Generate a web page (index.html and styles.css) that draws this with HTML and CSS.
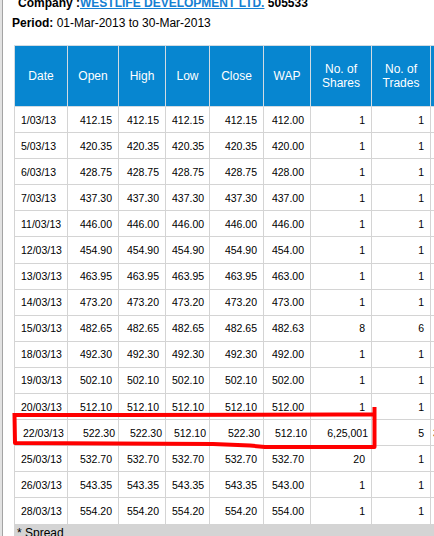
FILE: index.html
```html
<!DOCTYPE html>
<html>
<head>
<meta charset="utf-8">
<link rel="stylesheet" href="styles.css">
</head>
<body>
<div class="frame">
<div class="page">
  <div class="info">
    <p class="company"><b>Company :</b><a href="#">WESTLIFE DEVELOPMENT LTD.</a> <b>505533</b></p>
    <p class="period"><b>Period:</b> 01-Mar-2013 to 30-Mar-2013</p>
  </div>
  <table class="prices">
    <colgroup>
      <col class="c-date"><col class="c-open"><col class="c-high"><col class="c-low"><col class="c-close"><col class="c-wap"><col class="c-shares"><col class="c-trades"><col class="c-turn">
    </colgroup>
    <thead>
      <tr><th>Date</th><th>Open</th><th>High</th><th>Low</th><th>Close</th><th>WAP</th><th>No. of<br>Shares</th><th>No. of<br>Trades</th><th>Total<br>Turnover</th></tr>
    </thead>
    <tbody>
      <tr><td>1/03/13</td><td>412.15</td><td>412.15</td><td>412.15</td><td>412.15</td><td>412.00</td><td>1</td><td>1</td><td></td></tr>
      <tr><td>5/03/13</td><td>420.35</td><td>420.35</td><td>420.35</td><td>420.35</td><td>420.00</td><td>1</td><td>1</td><td></td></tr>
      <tr><td>6/03/13</td><td>428.75</td><td>428.75</td><td>428.75</td><td>428.75</td><td>428.00</td><td>1</td><td>1</td><td></td></tr>
      <tr><td>7/03/13</td><td>437.30</td><td>437.30</td><td>437.30</td><td>437.30</td><td>437.00</td><td>1</td><td>1</td><td></td></tr>
      <tr><td>11/03/13</td><td>446.00</td><td>446.00</td><td>446.00</td><td>446.00</td><td>446.00</td><td>1</td><td>1</td><td></td></tr>
      <tr><td>12/03/13</td><td>454.90</td><td>454.90</td><td>454.90</td><td>454.90</td><td>454.00</td><td>1</td><td>1</td><td></td></tr>
      <tr><td>13/03/13</td><td>463.95</td><td>463.95</td><td>463.95</td><td>463.95</td><td>463.00</td><td>1</td><td>1</td><td></td></tr>
      <tr><td>14/03/13</td><td>473.20</td><td>473.20</td><td>473.20</td><td>473.20</td><td>473.00</td><td>1</td><td>1</td><td></td></tr>
      <tr><td>15/03/13</td><td>482.65</td><td>482.65</td><td>482.65</td><td>482.65</td><td>482.63</td><td>8</td><td>6</td><td></td></tr>
      <tr><td>18/03/13</td><td>492.30</td><td>492.30</td><td>492.30</td><td>492.30</td><td>492.00</td><td>1</td><td>1</td><td></td></tr>
      <tr><td>19/03/13</td><td>502.10</td><td>502.10</td><td>502.10</td><td>502.10</td><td>502.00</td><td>1</td><td>1</td><td></td></tr>
      <tr><td>20/03/13</td><td>512.10</td><td>512.10</td><td>512.10</td><td>512.10</td><td>512.00</td><td>1</td><td>1</td><td></td></tr>
      <tr class="pasted"><td>22/03/13</td><td>522.30</td><td>522.30</td><td>512.10</td><td>522.30</td><td>512.10</td><td>6,25,001</td><td>5</td><td class="turn">3,26,51,522</td></tr>
      <tr><td>25/03/13</td><td>532.70</td><td>532.70</td><td>532.70</td><td>532.70</td><td>532.70</td><td>20</td><td>1</td><td></td></tr>
      <tr><td>26/03/13</td><td>543.35</td><td>543.35</td><td>543.35</td><td>543.35</td><td>543.00</td><td>1</td><td>1</td><td></td></tr>
      <tr><td>28/03/13</td><td>554.20</td><td>554.20</td><td>554.20</td><td>554.20</td><td>554.00</td><td>1</td><td>1</td><td></td></tr>
    </tbody>
  </table>
  <div class="spread">* Spread</div>
  <svg class="annot" width="434" height="536" viewBox="0 0 434 536">
    <path d="M15 415 L126 415 L337 414.5 L374.5 414.5 M374.5 409 L374.5 447 L265 447 L250 445.5 L213 444 L15 443 L14.5 415" fill="none" stroke="#ff0000" stroke-width="4" stroke-linejoin="round" stroke-linecap="square"/>
  </svg>
</div>
</div>
</body>
</html>
```
FILE: styles.css
```css
html, body {
  margin: 0;
  padding: 0;
  background: #ffffff;
  overflow: hidden;
}
body {
  width: 434px;
  height: 536px;
  font-family: "Liberation Sans", Arial, sans-serif;
  color: #000;
}
.frame {
  display: flow-root;
  border-left: 2px solid #e2e2e2;
  height: 536px;
  overflow: hidden;
}
.page {
  display: flow-root;
  position: relative;
  border-left: 1px solid #a4a4a4;
  height: 536px;
}
.info {
  font-size: 12px;
  line-height: 20px;
  margin-top: -7px;
}
.info p {
  margin: 0;
  white-space: nowrap;
}
.company {
  padding-left: 15px;
}
.company a {
  color: #1580d2;
  font-weight: bold;
  text-decoration: underline;
}
.period {
  padding-left: 9px;
}
.prices {
  border-collapse: collapse;
  table-layout: fixed;
  width: 537px;
  margin: 12px 0 0 11px;
  font-size: 10.5px;
}
.c-date { width: 53px; }
.c-open { width: 51px; }
.c-high { width: 47px; }
.c-low { width: 44px; }
.c-close { width: 54px; }
.c-wap { width: 47px; }
.c-shares { width: 61px; }
.c-trades { width: 59px; }
.c-turn { width: 120px; }
.prices th {
  background: #0786d0;
  color: #ffffff;
  font-weight: normal;
  font-size: 12px;
  line-height: 13.5px;
  height: 59px;
  padding: 1px 2px 0;
  border: 1px solid #d2dbe2;
  text-align: center;
  vertical-align: middle;
}
.prices td {
  height: 25.1px;
  padding: 0 6px;
  border: 1px solid #d4d4d4;
  text-align: right;
  vertical-align: middle;
  white-space: nowrap;
}
.prices td:first-child {
  text-align: left;
}
.prices tr.pasted td {
  padding-right: 3px;
}
.prices tr.pasted td:first-child {
  padding-left: 8px;
}
.prices tr.pasted td:nth-child(8) {
  padding-right: 6px;
}
.prices td.turn {
  text-align: left;
  padding-left: 2px;
}
.spread {
  background: #d4d4d4;
  margin-left: 11px;
  padding-left: 3px;
  font-size: 12px;
  line-height: 14px;
  padding-top: 1px;
}
.annot {
  position: absolute;
  left: -3px;
  top: 0;
  pointer-events: none;
}
```
